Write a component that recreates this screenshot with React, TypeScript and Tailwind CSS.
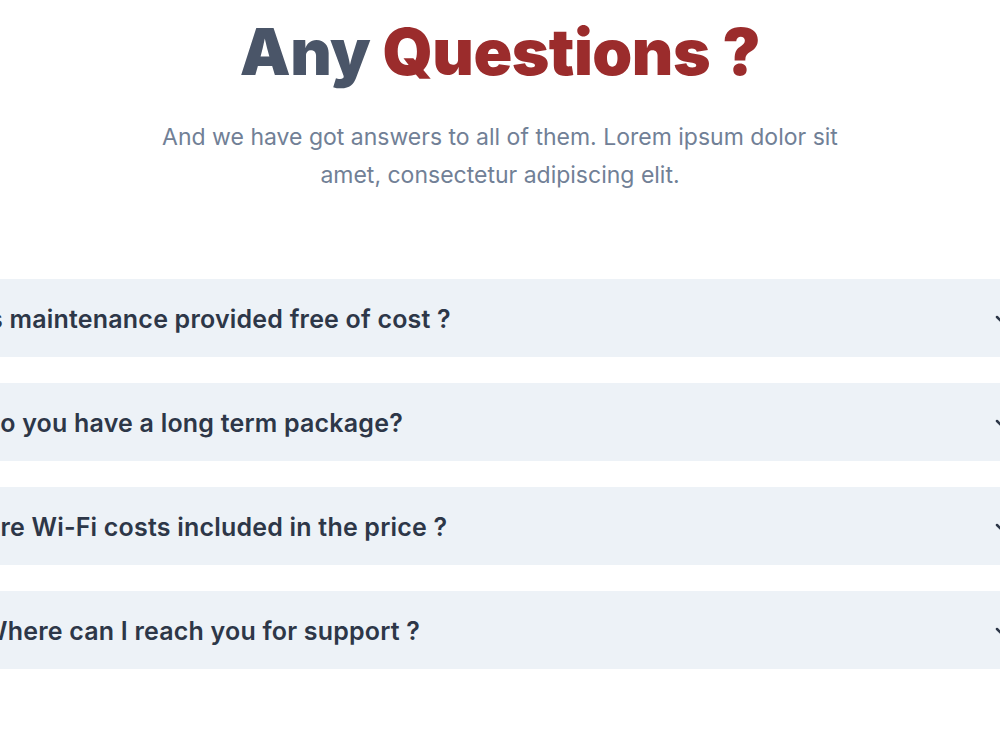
import { ChevronDown } from 'lucide-react';

const faqs = [
  'Is maintenance provided free of cost ?',
  'Do you have a long term package?',
  'Are Wi-Fi costs included in the price ?',
  'Where can I reach you for support ?',
];

export default function App() {
  return (
    <div
      className="min-h-[750px] bg-white overflow-hidden"
      style={{ fontFamily: 'Inter, "Noto Sans", sans-serif' }}
    >
      <section className="pt-5">
        <h1 className="text-center text-[64px] leading-[64px] font-black tracking-[-0.5px] text-[#4a5568]">
          Any <span className="text-[#9b2c2c]">Questions ?</span>
        </h1>
        <p className="mx-auto mt-[34px] max-w-[700px] text-center text-[23px] leading-[38px] text-[#718096]">
          And we have got answers to all of them. Lorem ipsum dolor sit amet,
          consectetur adipiscing elit.
        </p>

        <div className="mt-[85px] flex justify-center">
          <div className="w-[1080px] shrink-0 flex flex-col gap-[26px]">
            {faqs.map((q) => (
              <div
                key={q}
                className="h-[78px] bg-[#edf2f7] pl-[22px] pr-[25px] pt-1 flex items-center justify-between"
              >
                <span className="text-[25px] font-semibold tracking-[0.2px] text-[#2d3748]">
                  {q}
                </span>
                <ChevronDown className="w-6 h-6 text-[#2d3748]" strokeWidth={2.5} />
              </div>
            ))}
          </div>
        </div>
      </section>
    </div>
  );
}
